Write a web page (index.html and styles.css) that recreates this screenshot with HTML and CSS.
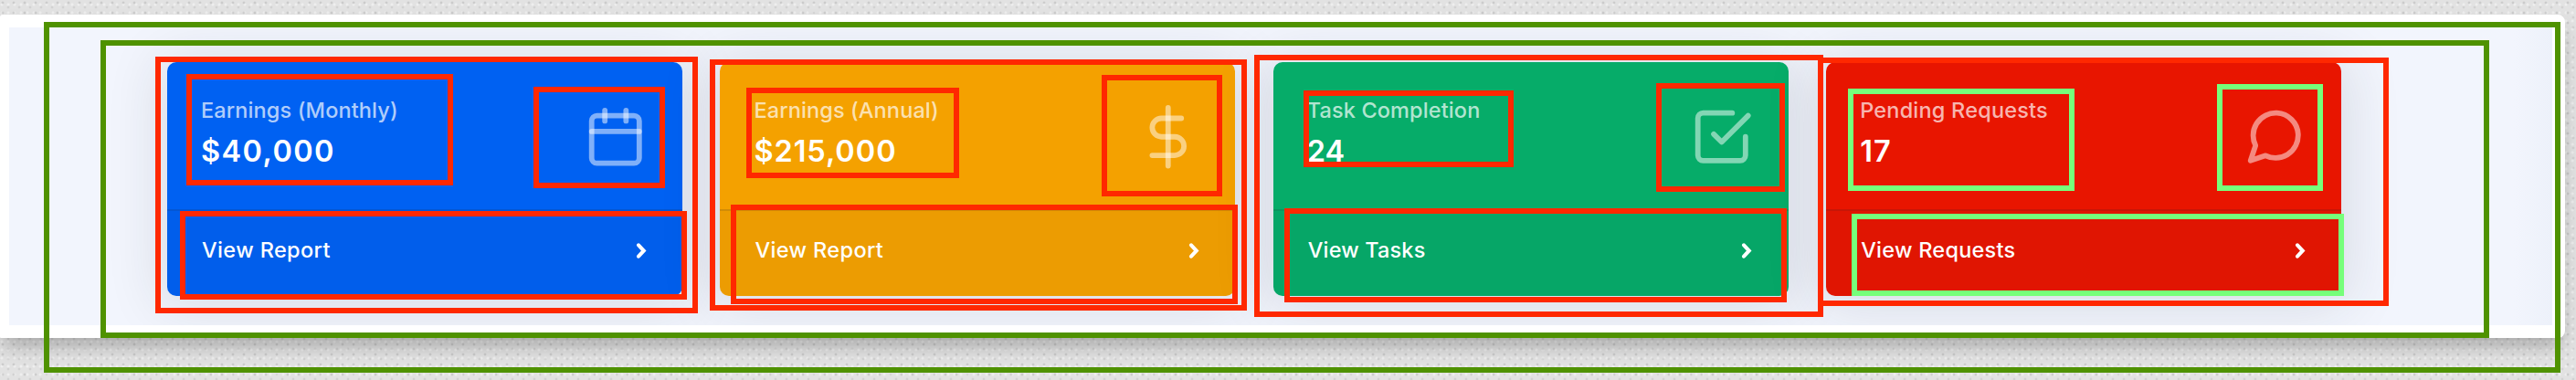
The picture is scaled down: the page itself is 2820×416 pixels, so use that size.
FILE: index.html
```html
<!DOCTYPE html>
<html lang="en">
<head>
<meta charset="utf-8">
<title>Dashboard cards</title>
<link rel="stylesheet" href="styles.css">
</head>
<body>
<main class="panel">
  <section class="cards">
    <article class="card blue">
      <div class="body">
        <div class="copy"><div class="label l1">Earnings (Monthly)</div><div class="value v1">$40,000</div></div>
        <svg class="icon" viewBox="0 0 24 24"><rect x="3" y="4" width="18" height="18" rx="2"/><line x1="16" y1="2" x2="16" y2="6"/><line x1="8" y1="2" x2="8" y2="6"/><line x1="3" y1="10" x2="21" y2="10"/></svg>
      </div>
      <a class="foot"><span class="f1">View Report</span><svg class="chev" viewBox="0 0 10 16"><path d="M2.2 2.2 7.6 8 2.2 13.8"/></svg></a>
    </article>
    <article class="card yellow">
      <div class="body">
        <div class="copy"><div class="label l2">Earnings (Annual)</div><div class="value v2">$215,000</div></div>
        <svg class="icon" viewBox="0 0 24 24"><line x1="12" y1="1" x2="12" y2="23"/><path d="M17 5H9.5a3.5 3.5 0 0 0 0 7h5a3.5 3.5 0 0 1 0 7H6"/></svg>
      </div>
      <a class="foot"><span class="f1">View Report</span><svg class="chev" viewBox="0 0 10 16"><path d="M2.2 2.2 7.6 8 2.2 13.8"/></svg></a>
    </article>
    <article class="card green">
      <div class="body">
        <div class="copy"><div class="label l3">Task Completion</div><div class="value v3">24</div></div>
        <svg class="icon" viewBox="0 0 24 24"><polyline points="9 11 12 14 22 4"/><path d="M21 12v7a2 2 0 0 1-2 2H5a2 2 0 0 1-2-2V5a2 2 0 0 1 2-2h11"/></svg>
      </div>
      <a class="foot"><span class="f3">View Tasks</span><svg class="chev" viewBox="0 0 10 16"><path d="M2.2 2.2 7.6 8 2.2 13.8"/></svg></a>
    </article>
    <article class="card red">
      <div class="body">
        <div class="copy"><div class="label l4">Pending Requests</div><div class="value v4">17</div></div>
        <svg class="icon" viewBox="0 0 24 24"><path d="M21 11.5a8.38 8.38 0 0 1-.9 3.8 8.5 8.5 0 0 1-7.6 4.7 8.38 8.38 0 0 1-3.8-.9L3 21l1.9-5.7a8.38 8.38 0 0 1-.9-3.8 8.5 8.5 0 0 1 4.7-7.6 8.38 8.38 0 0 1 3.8-.9h.5a8.48 8.48 0 0 1 8 8v.5z"/></svg>
      </div>
      <a class="foot"><span class="f4">View Requests</span><svg class="chev" viewBox="0 0 10 16"><path d="M2.2 2.2 7.6 8 2.2 13.8"/></svg></a>
    </article>
  </section>
</main>
<div class="marks">
  <i class="mark dark m-outer"></i><i class="mark dark m-inner"></i>
  <i class="mark m-c1"></i><i class="mark m-t1"></i><i class="mark m-i1"></i><i class="mark m-f1"></i>
  <i class="mark m-c2"></i><i class="mark m-t2"></i><i class="mark m-i2"></i><i class="mark m-f2"></i>
  <i class="mark m-c4"></i><i class="mark m-c3"></i><i class="mark m-t3"></i><i class="mark m-i3"></i><i class="mark m-f3"></i>
  <i class="mark light m-t4"></i><i class="mark light m-i4"></i><i class="mark light m-f4"></i>
</div>
</body>
</html>
```
FILE: styles.css
```css
* { box-sizing: border-box; }
body {
  margin: 0;
  height: 416px;
  padding-top: 16px;
  position: relative;
  overflow: hidden;
  font-family: Inter, "Liberation Sans", sans-serif;
  background-color: #e2e2e2;
  background-image:
    radial-gradient(circle at 3px 3px, rgba(0,0,0,.1) 0 1px, transparent 1.8px),
    radial-gradient(circle at 9px 8px, rgba(0,0,0,.07) 0 1px, transparent 1.8px),
    radial-gradient(circle at 2px 5px, rgba(255,255,255,.4) 0 1px, transparent 2px);
  background-size: 12px 11px, 12px 11px, 7px 9px;
}
.panel {
  width: 2808px;
  height: 354px;
  padding: 14px 14px 14px 10px;
  background: #fff;
  border-radius: 3px 8px 8px 1px;
  box-shadow: 0 12px 20px -3px rgba(0,0,0,.26);
}
.cards {
  height: 326px;
  padding: 38px 0 0 173px;
  display: flex;
  gap: 41.4px;
  background: linear-gradient(90deg, #f2f5fd 98.5%, #edf1fa);
  overflow: hidden;
}
.card {
  flex: none;
  width: 564px;
  height: 255.5px;
  border-radius: 10px;
  display: flex;
  flex-direction: column;
  color: #fff;
  box-shadow: 0 4px 60px 8px rgba(33,40,50,.12);
}
.blue { background: #0061f2; }
.yellow { background: #f4a100; }
.green { background: #06ac69; }
.red { background: #e81500; }
.body {
  height: 161px;
  padding: 47px 38.5px 0 37px;
  display: flex;
  justify-content: space-between;
}
.copy { white-space: nowrap; }
.label { height: 28px; margin-top: -8px; font-size: 23.5px; line-height: 28px; font-weight: 500; color: rgba(255,255,255,.7); letter-spacing: .12px; }
.value { height: 40px; margin-top: 10.5px; font-size: 32.5px; line-height: 40px; font-weight: 600; }
.l4 { letter-spacing: .2px; }
.v1 { letter-spacing: 1.4px; }
.v2 { letter-spacing: .95px; }
.v4 { letter-spacing: 1px; }
.icon {
  width: 69.5px;
  height: 69.5px;
  fill: none;
  stroke: rgba(255,255,255,.5);
  stroke-width: 2;
  stroke-linecap: round;
  stroke-linejoin: round;
}
.foot {
  flex: 1;
  padding: 0 39.5px 6px 38px;
  display: flex;
  align-items: center;
  justify-content: space-between;
  font-size: 23.5px;
  line-height: 28px;
  font-weight: 500;
  background: rgba(33,40,50,.035);
  border-top: 2px solid rgba(33,40,50,.13);
  border-radius: 0 0 10px 10px;
}
.f1 { letter-spacing: .38px; }
.f3 { letter-spacing: .15px; }
.f4 { letter-spacing: .25px; }
.chev { width: 12px; height: 17px; fill: none; stroke: #fff; stroke-width: 3.8; stroke-linecap: round; stroke-linejoin: miter; }
.marks { position: absolute; inset: 0; }
.mark { position: absolute; border: 6px solid #ff2800; }
.dark { border-color: #4f9200; }
.light { border-color: #76ff7a; }
.m-outer { left: 48px; top: 24px; width: 2755px; height: 384px; }
.m-inner { left: 110px; top: 44px; width: 2615px; height: 326px; }
.m-c1 { left: 170px; top: 62px; width: 594px; height: 281px; }
.m-t1 { left: 204px; top: 81px; width: 292px; height: 122px; }
.m-i1 { left: 584px; top: 95px; width: 144px; height: 111px; }
.m-f1 { left: 197px; top: 231px; width: 555px; height: 97px; }
.m-c2 { left: 777px; top: 65px; width: 588px; height: 275px; }
.m-t2 { left: 817px; top: 96px; width: 233px; height: 99px; }
.m-i2 { left: 1206px; top: 82px; width: 132px; height: 133px; }
.m-f2 { left: 800px; top: 224px; width: 555px; height: 109px; }
.m-c3 { left: 1373px; top: 60px; width: 623px; height: 287px; }
.m-t3 { left: 1427px; top: 99px; width: 230px; height: 84px; }
.m-i3 { left: 1813px; top: 91px; width: 141px; height: 119px; }
.m-f3 { left: 1406px; top: 228px; width: 550px; height: 103px; }
.m-c4 { left: 1990px; top: 63px; width: 625px; height: 272px; }
.m-t4 { left: 2023px; top: 97px; width: 248px; height: 112px; }
.m-i4 { left: 2427px; top: 92px; width: 116px; height: 117px; }
.m-f4 { left: 2027px; top: 234px; width: 539px; height: 90px; }
```
